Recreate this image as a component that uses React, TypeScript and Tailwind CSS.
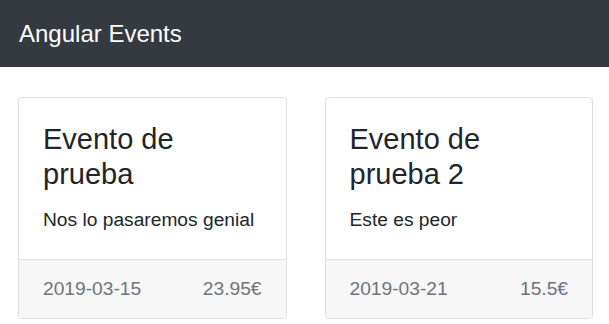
const events = [
  { title: "Evento de prueba", description: "Nos lo pasaremos genial", date: "2019-03-15", price: "23.95€" },
  { title: "Evento de prueba 2", description: "Este es peor", date: "2019-03-21", price: "15.5€" },
];

export default function App() {
  return (
    <div className="min-h-screen bg-white font-['Liberation_Sans',Arial,sans-serif] text-[#212529]">
      <nav className="h-[67px] bg-[#343a40] px-[19px] flex items-center">
        <span className="text-white text-[24px] leading-none">Angular Events</span>
      </nav>
      <main className="grid grid-cols-2 gap-[38px] pl-[18px] pr-[16px] pt-[30px]">
        {events.map((e) => (
          <div key={e.date} className="border border-[#dfdfdf] rounded-[4px] overflow-hidden flex flex-col">
            <div className="px-6 pt-6 pb-[25px] flex-1">
              <h3 className="text-[29px] leading-[34.8px] mb-[14px]">{e.title}</h3>
              <p className="text-[19.2px] leading-[28.8px]">{e.description}</p>
            </div>
            <div className="bg-[#f7f7f7] border-t border-[#dfdfdf] px-6 py-[14.6px] flex justify-between text-[19.2px] leading-[28.8px] text-[#6c757d]">
              <span>{e.date}</span>
              <span>{e.price}</span>
            </div>
          </div>
        ))}
      </main>
    </div>
  );
}
